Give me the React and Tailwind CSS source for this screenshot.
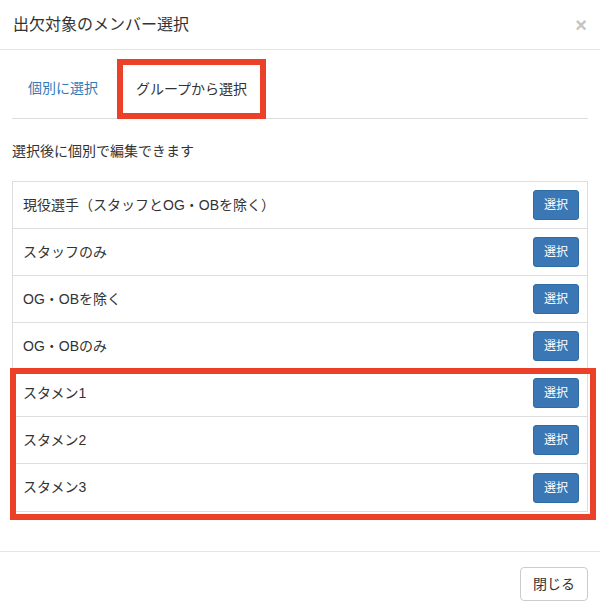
const groups = [
  '現役選手（スタッフとOG・OBを除く）',
  'スタッフのみ',
  'OG・OBを除く',
  'OG・OBのみ',
]

const starters = ['スタメン1', 'スタメン2', 'スタメン3']

function Row({ label, last }) {
  return (
    <div className={`flex items-center justify-between h-[47px] pl-[10px] pr-[8px] ${last ? '' : 'border-b border-[#ddd]'}`}>
      <span className="text-[14px] text-[#333]">{label}</span>
      <button className="h-[30px] px-[10px] rounded-[3px] bg-[#3a77b4] border border-[#2e6da4] text-white text-[12px] leading-none">
        選択
      </button>
    </div>
  )
}

export default function App() {
  return (
    <div
      className="w-[600px] h-[614px] bg-white text-[#333] overflow-hidden"
      style={{ fontFamily: '"Liberation Sans", "Noto Sans CJK JP", sans-serif' }}
    >
      {/* header */}
      <div className="h-[50px] flex items-center justify-between pl-[13px] pr-[13px] border-b border-[#e5e5e5]">
        <h4 className="text-[16px] leading-none">出欠対象のメンバー選択</h4>
        <span className="text-[20px] font-bold text-[#c4c4c4] leading-none">×</span>
      </div>

      <div className="px-[12px]">
        {/* tabs */}
        <div className="flex items-end h-[69px] border-b border-[#ddd]">
          <a className="h-[60px] flex items-center pl-[16px] w-[105px] text-[14px] text-[#337ab7]">個別に選択</a>
          <div className="relative h-[60px] w-[149px] flex items-center justify-center text-[14px] text-[#333] bg-white mb-[-1px]">
            グループから選択
            <div className="absolute inset-0 border-[6px] border-[#ea4128]" />
          </div>
        </div>

        <p className="text-[14px] leading-none mt-[25px]">選択後に個別で編集できます</p>

        {/* list */}
        <div className="mt-[23px] border border-[#ddd]">
          {groups.map(g => (
            <Row key={g} label={g} />
          ))}
          <div className="relative">
            {starters.map((s, i) => (
              <Row key={s} label={s} last={i === starters.length - 1} />
            ))}
            <div className="absolute left-[-3px] right-[-9px] top-[-2px] bottom-[-9px] border-[6px] border-[#ea4128]" />
          </div>
        </div>
      </div>

      {/* footer */}
      <div className="mt-[39px] border-t border-[#e5e5e5] flex justify-end pt-[15px] pr-[12px]">
        <button className="h-[34px] px-[12px] rounded-[4px] border border-[#ccc] bg-white text-[14px] text-[#333]">
          閉じる
        </button>
      </div>
    </div>
  )
}
